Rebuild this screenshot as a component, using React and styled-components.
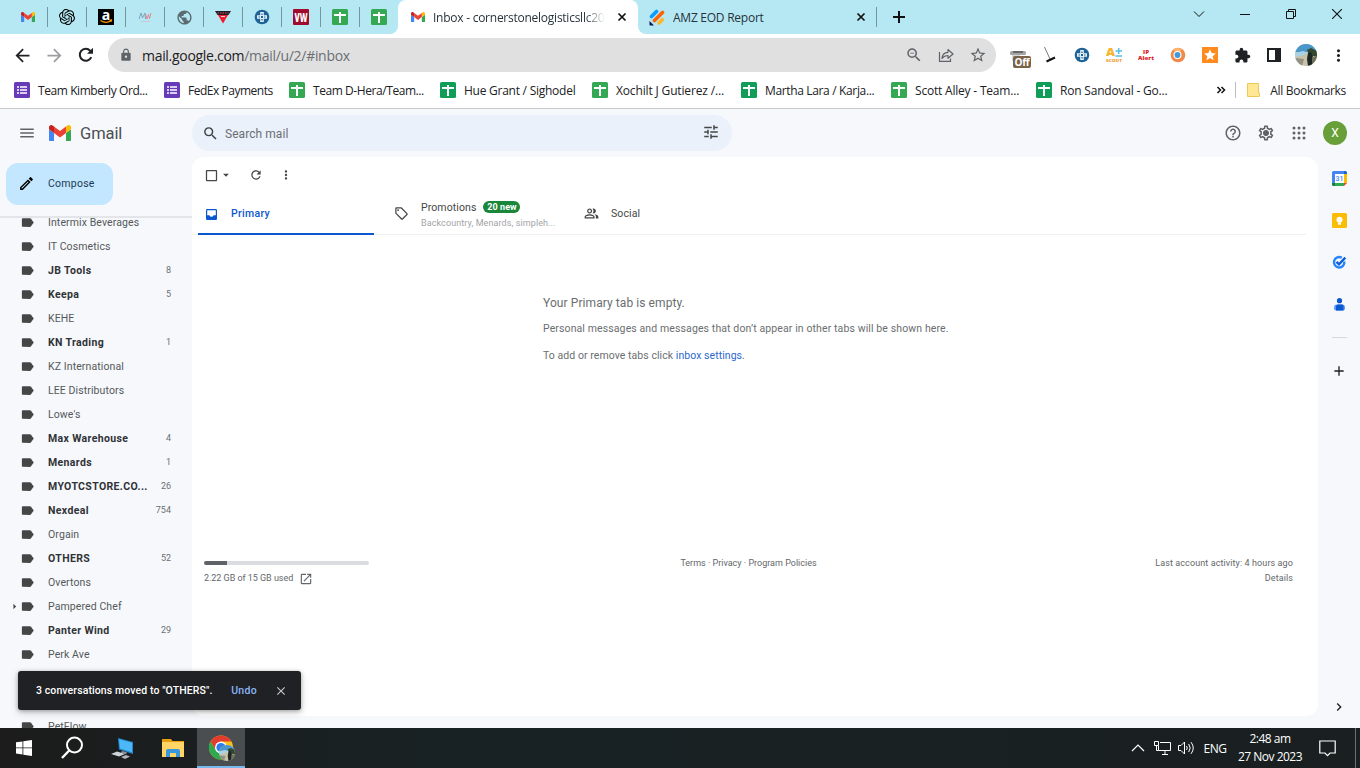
import React from "react";
import styled, { createGlobalStyle } from "styled-components";
import {
  MdSearch,
  MdMenu,
  MdTune,
  MdHelpOutline,
  MdOutlineSettings,
  MdRefresh,
  MdMoreVert,
  MdOutlineSell,
  MdOutlinePeopleAlt,
  MdOpenInNew,
  MdClose,
  MdArrowDropDown,
  MdArrowRight,
  MdCheckBoxOutlineBlank,
  MdOutlineModeEdit,
  MdArrowBack,
  MdArrowForward,
  MdLock,
  MdZoomOut,
  MdStarBorder,
  MdStar,
  MdExtension,
  MdAdd,
  MdChevronRight,
  MdLabel,
  MdPublic,
} from "react-icons/md";
import { SiOpenai } from "react-icons/si";

const GlobalStyle = createGlobalStyle`
  * {
    box-sizing: border-box;
  }
  body {
    margin: 0;
    overflow: hidden;
    font-family: "Open Sans", "Noto Sans", sans-serif;
  }
  svg {
    display: block;
    flex: none;
  }
`;

const Screen = styled.div`
  width: 1360px;
  height: 768px;
  display: flex;
  flex-direction: column;
  overflow: hidden;
`;

const Text = styled.span`
  white-space: nowrap;
  letter-spacing: ${(p) => p.$ls || 0}px;
`;

/* ---------- browser tabs ---------- */

const TabStrip = styled.div`
  height: 34px;
  flex: none;
  display: flex;
  background: #fff;
`;

const PinnedTabs = styled.div`
  width: 398px;
  padding-left: 9px;
  display: flex;
  align-items: center;
  background: #b5e8f3;
  border-bottom-right-radius: 8px;
`;

const PinnedTab = styled.div`
  width: 39px;
  height: 20px;
  flex: none;
  display: flex;
  align-items: center;
  justify-content: center;
  border-right: 1px solid ${(p) => (p.$last ? "transparent" : "#74969d")};
`;

const ActiveTabWrap = styled.div`
  width: 240px;
  background: #b5e8f3;
`;

const ActiveTab = styled.div`
  height: 34px;
  display: flex;
  align-items: center;
  padding: 0 6px 0 13px;
  background: #fff;
  border-radius: 8px 8px 0 0;
`;

const TabTitle = styled.div`
  width: ${(p) => p.$w}px;
  margin: 0 ${(p) => p.$gap || 0}px 0 8px;
  font-size: 12px;
  letter-spacing: ${(p) => p.$ls}px;
  color: #27333a;
  white-space: nowrap;
  overflow: hidden;
  mask-image: ${(p) =>
    p.$fade ? "linear-gradient(90deg, #000 88%, transparent)" : "none"};
`;

const OtherTabs = styled.div`
  flex: 1;
  display: flex;
  align-items: center;
  padding-left: 11px;
  background: #b5e8f3;
  border-bottom-left-radius: 8px;
`;

const TabDivider = styled.div`
  width: 1px;
  height: 20px;
  margin: 0 14px 0 5px;
  background: #74969d;
`;

const WindowControls = styled.div`
  display: flex;
  margin-left: auto;
  align-self: flex-start;
`;

const WindowButton = styled.div`
  width: 46px;
  height: 28px;
  display: flex;
  align-items: center;
  justify-content: center;
`;

/* ---------- address bar and bookmarks ---------- */

const Toolbar = styled.div`
  height: 42px;
  flex: none;
  display: flex;
  align-items: center;
  padding: 0 6px;
  background: #fff;
`;

const ToolCell = styled.div`
  width: 32px;
  display: flex;
  align-items: center;
  justify-content: center;
  color: ${(p) => p.$color || "#202124"};
`;

const Omnibox = styled.div`
  width: 888px;
  height: 34px;
  margin: 0 6px;
  padding: 0 2px 0 11px;
  display: flex;
  align-items: center;
  border-radius: 17px;
  background: #e0e0e0;
  color: #5f6368;
`;

const Url = styled.div`
  flex: 1;
  margin-left: 9px;
  font-size: 14px;
  letter-spacing: -0.3px;
  color: #6b6f73;

  b {
    font-weight: 400;
    color: #202124;
  }
`;

const ExtensionBadge = styled.div`
  position: relative;

  span {
    position: absolute;
    left: 4px;
    top: 9px;
    width: 18px;
    height: 12px;
    border-radius: 2px;
    background: #7a6248;
    color: #fff;
    font-size: 10px;
    font-weight: 700;
    line-height: 12px;
    letter-spacing: -0.3px;
    text-align: center;
  }
`;

const OrangeTile = styled.div`
  width: 16px;
  height: 16px;
  background: #ff8a1e;
  color: #fff;
  display: flex;
  align-items: center;
  justify-content: center;
`;

const BookmarkBar = styled.div`
  height: 33px;
  flex: none;
  display: flex;
  align-items: center;
  padding: 0 14px 4px;
  background: #fff;
  border-bottom: 1px solid #c9cbcf;
`;

const Bookmark = styled.div`
  display: flex;
  align-items: center;
  margin-right: 16px;
  color: #202124;
  font-size: 12px;

  span {
    width: ${(p) => p.$w}px;
    margin-left: 8px;
    white-space: nowrap;
    letter-spacing: ${(p) => p.$ls || -0.2}px;
  }
`;

const BookmarkEnd = styled.div`
  margin-left: auto;
  display: flex;
  align-items: center;
  font-size: 12px;
  color: #202124;

  span {
    margin-left: 10px;
  }
`;

const BookmarkDivider = styled.div`
  width: 1px;
  height: 16px;
  margin: 0 11px 0 9px;
  background: #b9bcc0;
`;

/* ---------- gmail ---------- */

const Page = styled.div`
  height: 619px;
  flex: none;
  display: flex;
  flex-direction: column;
  background: #f6f8fc;
  font-family: Roboto, "Liberation Sans", sans-serif;
`;

const Header = styled.div`
  height: 48px;
  flex: none;
  display: flex;
  align-items: center;
  padding: 0 13px 0 18px;
  color: #5f6368;
`;

const Brand = styled.div`
  width: 174px;
  display: flex;
  align-items: center;

  span {
    margin-left: 9px;
    font-size: 16.5px;
    letter-spacing: -0.1px;
    color: #4c4f53;
  }
  svg + svg {
    margin-left: 13px;
  }
`;

const SearchBox = styled.div`
  width: 540px;
  height: 36px;
  padding: 0 12px 0 10px;
  display: flex;
  align-items: center;
  justify-content: space-between;
  border-radius: 18px;
  background: #eaf1fb;
  color: #444746;

  div {
    display: flex;
    align-items: center;
    gap: 6px;
    font-size: 12px;
    color: #6a6e72;
  }
  div svg {
    color: #3c4043;
  }
  div span {
    padding-top: 1px;
  }
  > svg {
    margin-bottom: 2px;
  }
`;

const HeaderIcons = styled.div`
  display: flex;
  align-items: center;
  margin-left: auto;
  gap: 15px;
`;

const Avatar = styled.div`
  width: 24px;
  height: 24px;
  border-radius: 50%;
  background: #689f38;
  color: #fff;
  font-size: 12px;
  line-height: 24px;
  text-align: center;
`;

const Body = styled.div`
  flex: 1;
  min-height: 0;
  display: flex;
`;

const Sidebar = styled.div`
  width: 192px;
  display: flex;
  flex-direction: column;
`;

const Compose = styled.div`
  width: 107px;
  height: 42px;
  flex: none;
  margin: 6px 0 11px 6px;
  padding: 0 0 1px 12px;
  display: flex;
  align-items: center;
  gap: 13px;
  border-radius: 12px;
  background: #c2e7ff;
  color: #1d3a52;
  font-size: 10.5px;
`;

const LabelList = styled.div`
  flex: 1;
  min-height: 0;
  overflow: hidden;
  border-top: 2px solid #e3e5e9;
`;

const LabelInner = styled.div`
  margin-top: -8px;
`;

const LabelRow = styled.div`
  height: 24px;
  display: flex;
  align-items: center;
  padding: 0 21px 0 8px;
  font-size: 10.5px;
  font-weight: ${(p) => (p.$unread ? 700 : 400)};
  color: ${(p) => (p.$unread ? "#303235" : "#55585a")};

  > span {
    width: 12px;
  }
  p {
    flex: 1;
    margin: 0 0 0 13px;
    white-space: nowrap;
    letter-spacing: ${(p) => (p.$unread ? 0.36 : 0.1)}px;
  }
  small {
    font-size: 9px;
    font-weight: 400;
    color: #6b6f73;
  }
`;

const LabelGap = styled.div`
  height: 48px;
`;

const Card = styled.div`
  width: 1126px;
  height: 559px;
  display: flex;
  flex-direction: column;
  border-radius: 12px;
  background: #fff;
`;

const ListTools = styled.div`
  height: 37px;
  flex: none;
  display: flex;
  align-items: center;
  padding: 0 0 1px 12px;
  color: #444746;

  svg:nth-child(3) {
    margin-left: 16px;
  }
  svg:nth-child(4) {
    margin-left: 16px;
  }
`;

const Categories = styled.div`
  height: 41px;
  width: 1114px;
  flex: none;
  display: flex;
  border-bottom: 1px solid #f0f1f2;
`;

const Category = styled.div`
  position: relative;
  width: 190px;
  display: flex;
  align-items: center;
  padding: 0 0 1px 12px;
  font-size: 10.5px;
  font-weight: ${(p) => (p.$active ? 500 : 400)};
  color: ${(p) => (p.$active ? "#0b57d0" : "#444746")};

  &::after {
    content: "";
    position: absolute;
    left: 6px;
    bottom: -1px;
    width: 176px;
    height: 2px;
    background: ${(p) => (p.$active ? "#0b57d0" : "transparent")};
  }
`;

const CategoryText = styled.div`
  margin-left: 12px;
  padding-top: ${(p) => p.$top || 0}px;

  > div {
    display: flex;
    align-items: center;
    height: 15px;
    letter-spacing: ${(p) => p.$ls || 0.1}px;
  }
  small {
    display: block;
    height: 15px;
    font-size: 9px;
    line-height: 17px;
    letter-spacing: 0.1px;
    color: #a2a4a7;
    white-space: nowrap;
  }
`;

const NewBadge = styled.span`
  width: 37px;
  height: 12px;
  margin-left: 7px;
  border-radius: 6px;
  background: #198639;
  color: #fff;
  font-size: 9px;
  font-weight: 700;
  line-height: 12px;
  text-align: center;
  letter-spacing: 0.1px;
`;

const EmptyState = styled.div`
  margin: 59px 0 0 351px;
  height: 262px;
  font-size: 10.5px;
  letter-spacing: 0.11px;
  color: #6b6e70;

  h3 {
    margin: 0;
    font-size: 12px;
    font-weight: 400;
    line-height: 18px;
    letter-spacing: 0.08px;
  }
  p {
    margin: 0;
    line-height: 15px;
    white-space: nowrap;
  }
  h3 + p {
    margin: 9px 0 12px;
  }
  p:last-child {
    letter-spacing: 0.06px;
  }
  a {
    color: #2a69d0;
  }
`;

const Footer = styled.div`
  display: grid;
  grid-template-columns: 300px 1fr 300px;
  padding: 0 25px 0 12px;
  font-size: 9px;
  line-height: 15px;
  color: #63676b;
`;

const Storage = styled.div`
  div {
    width: 165px;
    height: 4px;
    margin: 5px 0 6px;
    border-radius: 2px;
    background: linear-gradient(90deg, #5f6368 23px, #dadce0 23px);
  }
  p {
    margin: 0;
    display: flex;
    align-items: center;
    gap: 6px;
    letter-spacing: -0.04px;
  }
`;

const FooterLinks = styled.div`
  text-align: center;
`;

const Activity = styled.div`
  text-align: right;
  letter-spacing: 0.1px;
`;

const SidePanel = styled.div`
  width: 42px;
  height: 571px;
  display: flex;
  flex-direction: column;
  align-items: center;
  padding: 14px 0 13px;
  gap: 27px;
  color: #1f1f1f;
`;

const PanelRule = styled.div`
  width: 15px;
  height: 1px;
  margin: -2px 0 -2px;
  background: #d5d8dc;
`;

const PanelBottom = styled.div`
  margin-top: auto;
`;

const Toast = styled.div`
  position: absolute;
  left: 18px;
  top: 671px;
  width: 283px;
  height: 39px;
  padding: 0 13px 0 18px;
  display: flex;
  align-items: center;
  border-radius: 3px;
  background: #202124;
  box-shadow: 0 1px 4px rgba(0, 0, 0, 0.3), 0 3px 8px rgba(0, 0, 0, 0.15);
  font-family: Roboto, "Liberation Sans", sans-serif;
  font-size: 10.5px;
  font-weight: 500;
  color: #fff;

  a {
    margin: 0 17px 0 auto;
    letter-spacing: 0.3px;
    color: #8ab4f8;
  }
  svg {
    color: #c4c7c5;
  }
`;

/* ---------- taskbar ---------- */

const Taskbar = styled.div`
  height: 40px;
  flex: none;
  display: flex;
  align-items: center;
  background: linear-gradient(90deg, #1c1c1c, #182224 35%, #1a1f20);
  color: #fff;
`;

const TaskButton = styled.div`
  width: ${(p) => p.$w}px;
  height: 40px;
  display: flex;
  align-items: center;
  justify-content: center;
  padding-top: ${(p) => (p.$open ? 2 : 0)}px;
  background: ${(p) => (p.$open ? "#4a4e50" : "transparent")};
  border-bottom: ${(p) => (p.$open ? "2px solid #76b9ed" : "none")};
`;

const Tray = styled.div`
  margin-left: auto;
  display: flex;
  align-items: center;
  font-size: 12px;
`;

const TrayItem = styled.div`
  width: 24px;
  display: flex;
  justify-content: center;
`;

const Lang = styled.div`
  width: 34px;
  text-align: center;
  letter-spacing: -0.4px;
`;

const Clock = styled.div`
  width: 76px;
  margin-right: 7px;
  line-height: 18px;
  text-align: center;
  letter-spacing: -0.5px;
  white-space: nowrap;
`;

const ShowDesktop = styled.div`
  width: 5px;
  height: 40px;
  margin-left: 16px;
  border-left: 1px solid #6d7173;
`;

/* ---------- drawings ---------- */

const GmailLogo = ({ w }) => (
  <svg width={w} height={w * 0.75} viewBox="52 42 88 66">
    <path fill="#4285f4" d="M58 108h14V74L52 59v43c0 3.32 2.69 6 6 6" />
    <path fill="#34a853" d="M120 108h14c3.32 0 6-2.69 6-6V59l-20 15" />
    <path fill="#fbbc04" d="M120 48v26l20-15v-8c0-7.42-8.47-11.65-14.4-7.2" />
    <path fill="#ea4335" d="M72 74V48l24 18 24-18v26L96 92" />
    <path fill="#c5221f" d="M52 51v8l20 15V48l-5.6-4.2c-5.94-4.45-14.4-.22-14.4 7.2" />
  </svg>
);

const SheetsIcon = ({ color = "#34a853" }) => (
  <svg width="16" height="16">
    <rect width="16" height="16" rx="1.5" fill={color} />
    <path d="M2 6h12M8 3v11" stroke="#fff" strokeWidth="2" />
  </svg>
);

const FormsIcon = () => (
  <svg width="16" height="16">
    <rect width="16" height="16" rx="1.5" fill="#673ab7" />
    <path
      d="M3 5h2M3 8h2M3 11h2M6 5h7M6 8h7M6 11h7"
      stroke="#fff"
      strokeWidth="1.6"
    />
  </svg>
);

const AmazonIcon = () => (
  <svg width="16" height="16">
    <rect width="16" height="16" fill="#000" />
    <text x="8" y="10.5" fontFamily="Open Sans" fontSize="14" fontWeight="700" fill="#fff" textAnchor="middle">
      a
    </text>
    <path d="M2.5 11.500q5.500 3.600 10.500.3M11.500 11.200l2-.2-.5 1.800" fill="none" stroke="#f90" strokeWidth="1.200" />
  </svg>
);

const MwIcon = () => (
  <svg width="16" height="16">
    <path d="M2 10l2-6 1.500 5L8 4l.5 6" fill="none" stroke="#7ea3c0" strokeWidth="1" />
    <path d="M8.500 5l1.500 5 1.500-4.500 1 4L14 4" fill="none" stroke="#e08a93" strokeWidth="1" />
    <path d="M4 12.500h9" stroke="#d9b6c0" strokeWidth=".7" />
  </svg>
);

const TriangleIcon = () => (
  <svg width="16" height="16">
    <path d="M0 2h16l-2.500 4h-11z" fill="#231a2c" />
    <path d="M3 6h10L8 14.500z" fill="#f21b2b" />
    <path d="M2.500 4h11" stroke="#d85a4a" strokeWidth="1" strokeDasharray="1.500 1" />
    <path d="M6 7.500h4" stroke="#fff" strokeWidth=".8" />
  </svg>
);

const CrossIcon = () => (
  <svg width="16" height="16">
    <circle cx="8" cy="8" r="7.300" fill="#1f6396" />
    <path d="M6.200 3h3.600v3.200H13v3.600H9.800V13H6.200V9.800H3V6.200h3.200z" fill="#e2f2fa" />
    <path d="M8 4.500v1.500M8 10v1.500M4.500 8h1.500M10 8h1.500" stroke="#1f6396" strokeWidth="1.200" />
    <rect x="7" y="7" width="2" height="2" fill="#1f6396" />
  </svg>
);

const VwIcon = () => (
  <svg width="16" height="16">
    <rect width="16" height="16" rx="1" fill="#a00a2d" />
    <text x="8" y="12.500" fontFamily="Open Sans" fontSize="12.500" fontWeight="800" fill="#fff" textAnchor="middle" textLength="13" lengthAdjust="spacingAndGlyphs">
      VW
    </text>
  </svg>
);

const JotformIcon = () => (
  <svg width="16" height="17" strokeLinecap="round" strokeWidth="3.600" fill="none">
    <path d="M2.500 7.500L7.500 2.500" stroke="#0a9bff" />
    <path d="M5.500 11.500L13.500 3.500" stroke="#ff6100" />
    <path d="M10 14L13.300 10.700" stroke="#ffb629" />
    <path d="M.5 12v3.500q0 .9.900.9H5z" fill="#0a1551" stroke="none" />
  </svg>
);

const Stroke = ({ d, size = 10, color = "#111", w = 1 }) => (
  <svg width={size} height={size} viewBox={`0 0 ${size} ${size}`}>
    <path d={d} fill="none" stroke={color} strokeWidth={w} />
  </svg>
);

const ReloadIcon = () => (
  <svg width="16" height="16">
    <path d="M13.300 10.200A6 6 0 1 1 12.200 3.700L14 5.500" fill="none" stroke="#202124" strokeWidth="2" />
    <path d="M15 .8v6H9z" fill="#202124" />
  </svg>
);

const ShareIcon = () => (
  <svg width="16" height="16" fill="none" stroke="#5f6368" strokeWidth="1.200">
    <path d="M1.500 5v9.300h11V11.500" />
    <path d="M4 11.500c.3-4 2.500-6 6-6.200V2.500L15 7l-5 4.300V8.500c-2.500 0-4.300.8-6 3z" strokeLinejoin="round" />
  </svg>
);

const BroomIcon = () => (
  <svg width="16" height="16">
    <path d="M2.500 0l5.500 12" stroke="#777" strokeWidth="1" />
    <path d="M4.500 14.500L13 10.500" stroke="#111" strokeWidth="2" />
  </svg>
);

const PrinterIcon = () => (
  <svg width="18" height="16">
    <rect x="1" y="4" width="16" height="4" rx="1.500" fill="#a5a5a5" />
    <path d="M4 5h10" stroke="#555" strokeWidth="1.500" />
    <rect x="3" y="8" width="8" height="6" fill="#d8d8d8" />
  </svg>
);

const ScoutIcon = () => (
  <svg width="16" height="16" fontFamily="Open Sans" fontWeight="800">
    <text x="0" y="8.500" fontSize="10" fill="#f7b32b" textLength="9" lengthAdjust="spacingAndGlyphs">A</text>
    <path d="M9.500 4h6.500M12.700 1v6M9.500 9h6.500" stroke="#53bfe8" strokeWidth="1.500" />
    <text x="0" y="15" fontSize="4.200" fill="#f09a2a" textLength="16" lengthAdjust="spacingAndGlyphs">SCOUT</text>
  </svg>
);

const IpAlertIcon = () => (
  <svg width="16" height="16" fontFamily="Open Sans" fontWeight="800" fill="#dd1c2a">
    <text x="5" y="6.500" fontSize="5.200" textLength="6" lengthAdjust="spacingAndGlyphs">IP</text>
    <text x="0" y="12.700" fontSize="5.200" textLength="16" lengthAdjust="spacingAndGlyphs">Alert</text>
  </svg>
);

const BallIcon = () => (
  <svg width="16" height="16">
    <circle cx="8" cy="8" r="7.300" fill="#f08a4b" />
    <path d="M3 3a7 7 0 0 1 9-.5L8 6z" fill="#ffb56b" />
    <circle cx="7.500" cy="8" r="4" fill="#fff" />
    <circle cx="7.500" cy="8" r="2.900" fill="#3e9ad8" />
  </svg>
);

const PanelIcon = () => (
  <svg width="16" height="16">
    <rect x="2" y="2" width="12" height="12" fill="#fff" stroke="#202124" strokeWidth="2" />
    <rect x="9" y="2" width="5" height="12" fill="#202124" />
  </svg>
);

const ProfilePhoto = ({ size = 22 }) => (
  <svg width={size} height={size} viewBox="0 0 22 22">
    <clipPath id={"photo" + size}>
      <circle cx="11" cy="11" r="11" />
    </clipPath>
    <g clipPath={`url(#photo${size})`}>
      <rect width="22" height="22" fill="#c9c2a8" />
      <rect width="22" height="8" fill="#4a97cc" />
      <path d="M0 9l8-2 6 2-8 3-6 1z" fill="#a9d3e4" />
      <path d="M12 6l4-2 6 3v6l-8-2z" fill="#33482f" />
      <path d="M13 9l3-1 2 5-1 9h-4l-1-7z" fill="#1d2826" />
      <path d="M0 14l9 1-2 7H0z" fill="#8f9285" />
      <path d="M17 13h5v9h-5z" fill="#6c7159" />
    </g>
  </svg>
);

const FolderIcon = () => (
  <svg width="13" height="14">
    <path d="M.5.5h11v9.500h1v3.500H.5z" fill="#ffe793" stroke="#edc85a" />
  </svg>
);

const GearIcon = () => (
  <svg width="18" height="18">
    <MdOutlineSettings size={18} color="#5f6368" />
    <circle cx="9" cy="9" r="2.600" fill="#5f6368" />
  </svg>
);

const AppsIcon = () => (
  <svg width="18" height="18" fill="#5f6368">
    {[4, 9, 14].map((y) =>
      [4, 9, 14].map((x) => <circle key={x + "-" + y} cx={x} cy={y} r="1.500" />)
    )}
  </svg>
);

const InboxIcon = () => (
  <svg width="15" height="15">
    <path d="M3.200 3h8.600q1.200 0 1.200 1.200v8.600q0 1.200-1.200 1.200H3.200Q2 14 2 12.800V4.200Q2 3 3.200 3z" fill="#0b57d0" />
    <path d="M3.200 4.200h8.600v5H9.600q-.6 1.600-2.100 1.600T5.400 9.200H3.200z" fill="#fff" />
  </svg>
);

const CalendarIcon = () => (
  <svg width="15" height="15">
    <path d="M1.500 0H12v3H3v9H0V1.500Q0 0 1.500 0z" fill="#4285f4" />
    <path d="M12 0h1.500Q15 0 15 1.500V3h-3z" fill="#1967d2" />
    <path d="M12 3h3v9h-3z" fill="#fbbc04" />
    <path d="M3 12h9v3H3z" fill="#34a853" />
    <path d="M0 12h3v3H1.500Q0 15 0 13.500z" fill="#188038" />
    <path d="M12 12h3l-3 3z" fill="#ea4335" />
    <rect x="3" y="3" width="9" height="9" fill="#fff" />
    <text x="7.500" y="10" fontFamily="Roboto" fontSize="7" fontWeight="500" fill="#4285f4" textAnchor="middle">
      31
    </text>
  </svg>
);

const KeepIcon = () => (
  <svg width="15" height="15">
    <rect width="15" height="15" rx="1.500" fill="#fbbc04" />
    <circle cx="7.500" cy="6.800" r="3" fill="#fff" />
    <path d="M6 9.500h3v2.300H6z" fill="#fff" />
  </svg>
);

const TasksIcon = () => (
  <svg width="15" height="15" fill="none">
    <path d="M9.800 2.800A5.200 5.200 0 1 0 12.300 6.500" stroke="#2684fc" strokeWidth="2.400" />
    <path d="M4.500 6.800l2.500 2.500 6.300-6.600" stroke="#0b5fd8" strokeWidth="2.400" />
  </svg>
);

const ContactsIcon = () => (
  <svg width="15" height="15">
    <circle cx="7.500" cy="3.700" r="2.600" fill="#0b57d0" />
    <path d="M2 10.500Q2 7.500 5 7.500h5q3 0 3 3v1q0 2-2 2H4q-2 0-2-2z" fill="#5c9bff" />
    <path d="M5.500 7.500h5q1 .6 1 1.500v4.500H4V9z" fill="#0b57d0" />
  </svg>
);

const WindowsIcon = () => (
  <svg width="16" height="16" fill="#fff">
    <path d="M0 2.300L6.500 1.400v6.100H0zM7.300 1.300L16 0v7.500H7.300zM0 8.300h6.500v6.200L0 13.600zM7.300 8.300H16V16l-8.700-1.300z" />
  </svg>
);

const FinderIcon = () => (
  <svg width="24" height="24" fill="none" stroke="#fff" strokeWidth="2">
    <circle cx="14.500" cy="9" r="7.500" />
    <path d="M9.200 14.500L2 22" strokeWidth="2.400" />
  </svg>
);

const ComputerIcon = () => (
  <svg width="24" height="22">
    <path d="M8 1l15 4v12L9 12.500z" fill="#1e87d0" />
    <path d="M9 2.300l13 3.500v9.500L10 11.500z" fill="#4db8f8" />
    <path d="M12 14l5 1.300-1 2-5-1.500z" fill="#8b9299" />
    <path d="M1 17l6-2.500 8 2.500-6 2.500z" fill="#cfd4d8" />
    <path d="M11 20l5-2 4 1.500-5 2.500z" fill="#b0b7bd" />
  </svg>
);

const ExplorerIcon = () => (
  <svg width="22" height="18">
    <path d="M0 0h9l1.500 2H22v16H0z" fill="#e8a10e" />
    <path d="M0 3h22v15H0z" fill="#ffd666" />
    <path d="M4 18v-6q0-2 2-2h10q2 0 2 2v6h-4v-4H8v4z" fill="#3a96dd" />
  </svg>
);

const ChromeIcon = () => (
  <svg width="28" height="28" viewBox="0 0 28 28">
    <circle cx="14" cy="13.500" r="12" fill="#fbc116" />
    <path d="M3.600 7.500A12 12 0 0 1 24.400 7.500H14L8.800 16.500z" fill="#e33b2e" />
    <path d="M3.600 7.500A12 12 0 0 0 14 25.500l5.200-9H8.800z" fill="#2da94f" />
    <circle cx="14" cy="13.500" r="6" fill="#fff" />
    <circle cx="14" cy="13.500" r="4.600" fill="#2f7de9" />
    <g transform="translate(12 11)">
      <ProfilePhoto size={16} />
    </g>
  </svg>
);

/* ---------- data ---------- */

const pinned = [
  <GmailLogo w={14} />,
  <SiOpenai size={16} />,
  <AmazonIcon />,
  <MwIcon />,
  <MdPublic size={17} color="#5b6b70" />,
  <TriangleIcon />,
  <CrossIcon />,
  <VwIcon />,
  <SheetsIcon />,
  <SheetsIcon />,
];

const bookmarks = [
  { name: "Team Kimberly Ord...", w: 110, ls: -0.42, icon: <FormsIcon /> },
  { name: "FedEx Payments", w: 85, ls: -0.48, icon: <FormsIcon /> },
  { name: "Team D-Hera/Team...", w: 111, ls: -0.43, icon: <SheetsIcon /> },
  { name: "Hue Grant / Sighodel", w: 112, ls: -0.25, icon: <SheetsIcon color="#0f9d58" /> },
  { name: "Xochilt J Gutierez /...", w: 109, ls: -0.15, icon: <SheetsIcon /> },
  { name: "Martha Lara / Karja...", w: 110, ls: -0.35, icon: <SheetsIcon color="#0f9d58" /> },
  { name: "Scott Alley - Team...", w: 105, icon: <SheetsIcon /> },
  { name: "Ron Sandoval - Go...", w: 108, icon: <SheetsIcon color="#0f9d58" /> },
];

const labels = [
  { name: "Intermix Beverages" },
  { name: "IT Cosmetics" },
  { name: "JB Tools", count: 8 },
  { name: "Keepa", count: 5 },
  { name: "KEHE" },
  { name: "KN Trading", count: 1 },
  { name: "KZ International" },
  { name: "LEE Distributors" },
  { name: "Lowe's" },
  { name: "Max Warehouse", count: 4 },
  { name: "Menards", count: 1 },
  { name: "MYOTCSTORE.CO...", count: 26 },
  { name: "Nexdeal", count: 754 },
  { name: "Orgain" },
  { name: "OTHERS", count: 52 },
  { name: "Overtons" },
  { name: "Pampered Chef", nested: true },
  { name: "Panter Wind", count: 29 },
  { name: "Perk Ave" },
];

function Label({ name, count, nested }) {
  return (
    <LabelRow $unread={!!count}>
      <span>{nested && <MdArrowRight size={13} color="#444746" />}</span>
      <MdLabel size={15} color="#444746" />
      <p>{name}</p>
      {count && <small>{count}</small>}
    </LabelRow>
  );
}

function Browser() {
  return (
    <>
      <TabStrip>
        <PinnedTabs>
          {pinned.map((icon, i) => (
            <PinnedTab key={i} $last={i === pinned.length - 1}>
              {icon}
            </PinnedTab>
          ))}
        </PinnedTabs>
        <ActiveTabWrap>
          <ActiveTab>
            <GmailLogo w={14} />
            <TabTitle $w={172} $gap={7} $ls={-0.25} $fade>
              Inbox - cornerstonelogisticsllc20
            </TabTitle>
            <Stroke size={20} d="M6.500 6.500l7 7M13.500 6.500l-7 7" w={1.700} />
          </ActiveTab>
        </ActiveTabWrap>
        <OtherTabs>
          <JotformIcon />
          <TabTitle $w={178} $ls={-0.25}>
            AMZ EOD Report
          </TabTitle>
          <Stroke size={20} d="M6.500 6.500l7 7M13.500 6.500l-7 7" w={1.700} />
          <TabDivider />
          <Stroke size={16} d="M2 8h12M8 2v12" w={2} />
          <WindowControls>
            <WindowButton>
              <Stroke size={12} d="M1 3.500l5 5 5-5" />
            </WindowButton>
            <WindowButton>
              <Stroke size={10} d="M0 5.500h10" />
            </WindowButton>
            <WindowButton>
              <Stroke size={10} d="M.5 2.500h7v7h-7zM2.500 2.500v-2h7v7h-2" />
            </WindowButton>
            <WindowButton>
              <Stroke size={10} d="M0 0l10 10M10 0L0 10" w={1.100} />
            </WindowButton>
          </WindowControls>
        </OtherTabs>
      </TabStrip>
      <Toolbar>
        <ToolCell>
          <MdArrowBack size={21} />
        </ToolCell>
        <ToolCell $color="#9c9ea1">
          <MdArrowForward size={21} />
        </ToolCell>
        <ToolCell>
          <ReloadIcon />
        </ToolCell>
        <Omnibox>
          <MdLock size={14} />
          <Url>
            <b>mail.google.com</b>/mail/u/2/#inbox
          </Url>
          <ToolCell $color="#5f6368">
            <MdZoomOut size={18} />
          </ToolCell>
          <ToolCell>
            <ShareIcon />
          </ToolCell>
          <ToolCell $color="#5f6368">
            <MdStarBorder size={18} />
          </ToolCell>
        </Omnibox>
        <ToolCell>
          <ExtensionBadge>
            <PrinterIcon />
            <span>Off</span>
          </ExtensionBadge>
        </ToolCell>
        <ToolCell>
          <BroomIcon />
        </ToolCell>
        <ToolCell>
          <CrossIcon />
        </ToolCell>
        <ToolCell>
          <ScoutIcon />
        </ToolCell>
        <ToolCell>
          <IpAlertIcon />
        </ToolCell>
        <ToolCell>
          <BallIcon />
        </ToolCell>
        <ToolCell>
          <OrangeTile>
            <MdStar size={14} />
          </OrangeTile>
        </ToolCell>
        <ToolCell>
          <MdExtension size={17} />
        </ToolCell>
        <ToolCell>
          <PanelIcon />
        </ToolCell>
        <ToolCell>
          <ProfilePhoto />
        </ToolCell>
        <ToolCell>
          <MdMoreVert size={19} />
        </ToolCell>
      </Toolbar>
      <BookmarkBar>
        {bookmarks.map((b) => (
          <Bookmark key={b.name} $w={b.w} $ls={b.ls}>
            {b.icon}
            <span>{b.name}</span>
          </Bookmark>
        ))}
        <BookmarkEnd>
          <Stroke size={10} d="M1.500 2l3 3-3 3M5.500 2l3 3-3 3" w={1.500} />
          <BookmarkDivider />
          <FolderIcon />
          <Text $ls={-0.33}>All Bookmarks</Text>
        </BookmarkEnd>
      </BookmarkBar>
    </>
  );
}

function Gmail() {
  return (
    <Page>
      <Header>
        <Brand>
          <MdMenu size={18} />
          <GmailLogo w={22} />
          <span>Gmail</span>
        </Brand>
        <SearchBox>
          <div>
            <MdSearch size={17} />
            <Text $ls={0.06}>Search mail</Text>
          </div>
          <MdTune size={18} />
        </SearchBox>
        <HeaderIcons>
          <MdHelpOutline size={18} />
          <GearIcon />
          <AppsIcon />
          <Avatar>X</Avatar>
        </HeaderIcons>
      </Header>
      <Body>
        <Sidebar>
          <Compose>
            <MdOutlineModeEdit size={17} color="#000" />
            <Text $ls={0.25}>Compose</Text>
          </Compose>
          <LabelList>
            <LabelInner>
              {labels.map((l) => (
                <Label key={l.name} {...l} />
              ))}
              <LabelGap />
              <Label name="PetFlow" />
            </LabelInner>
          </LabelList>
        </Sidebar>
        <Card>
          <ListTools>
            <MdCheckBoxOutlineBlank size={15} />
            <MdArrowDropDown size={14} />
            <MdRefresh size={14} />
            <MdMoreVert size={14} />
          </ListTools>
          <Categories>
            <Category $active>
              <InboxIcon />
              <CategoryText $ls={0.3}>
                <div>Primary</div>
              </CategoryText>
            </Category>
            <Category>
              <MdOutlineSell size={15} />
              <CategoryText $top={2}>
                <div>
                  Promotions
                  <NewBadge>20 new</NewBadge>
                </div>
                <small>Backcountry, Menards, simpleh...</small>
              </CategoryText>
            </Category>
            <Category>
              <MdOutlinePeopleAlt size={15} />
              <CategoryText>
                <div>Social</div>
              </CategoryText>
            </Category>
          </Categories>
          <EmptyState>
            <h3>Your Primary tab is empty.</h3>
            <p>
              Personal messages and messages that don’t appear in other tabs
              will be shown here.
            </p>
            <p>
              To add or remove tabs click <a>inbox settings</a>.
            </p>
          </EmptyState>
          <Footer>
            <Storage>
              <div />
              <p>
                2.22 GB of 15 GB used
                <MdOpenInNew size={14} />
              </p>
            </Storage>
            <FooterLinks>Terms · Privacy · Program Policies</FooterLinks>
            <Activity>
              Last account activity: 4 hours ago
              <br />
              Details
            </Activity>
          </Footer>
        </Card>
        <SidePanel>
          <CalendarIcon />
          <KeepIcon />
          <TasksIcon />
          <ContactsIcon />
          <PanelRule />
          <MdAdd size={16} />
          <PanelBottom>
            <MdChevronRight size={16} />
          </PanelBottom>
        </SidePanel>
      </Body>
    </Page>
  );
}

function WindowsBar() {
  return (
    <Taskbar>
      <TaskButton $w={48}>
        <WindowsIcon />
      </TaskButton>
      <TaskButton $w={48}>
        <FinderIcon />
      </TaskButton>
      <TaskButton $w={52}>
        <ComputerIcon />
      </TaskButton>
      <TaskButton $w={49}>
        <ExplorerIcon />
      </TaskButton>
      <TaskButton $w={48} $open>
        <ChromeIcon />
      </TaskButton>
      <Tray>
        <TrayItem>
          <Stroke size={14} color="#fff" d="M1 10l6-6 6 6" w={1.200} />
        </TrayItem>
        <TrayItem>
          <svg width="17" height="16" fill="none" stroke="#fff">
            <path d="M6 2.500h10.500v8H4.500V6M8 14.500h6M11 10.500v4" />
            <path d="M.5 1.500h4v4h-4zM2.500 5.500v5h2" />
          </svg>
        </TrayItem>
        <TrayItem>
          <svg width="17" height="16" fill="none" stroke="#fff">
            <path d="M.5 5.500h2.500l3.500-3.500v12L3 10.500H.5z" />
            <path d="M8.500 6q1.500 2 0 4M10.700 4q3 4 0 8M13 2.200q4.500 5.800 0 11.600" />
          </svg>
        </TrayItem>
        <Lang>ENG</Lang>
        <Clock>
          2:48 am
          <br />
          27 Nov 2023
        </Clock>
        <TrayItem>
          <svg width="17" height="17" fill="none" stroke="#fff" strokeWidth="1.200">
            <path d="M.8 1h15.400v12H11l-2.500 2.700L6 13H.8z" />
          </svg>
        </TrayItem>
        <ShowDesktop />
      </Tray>
    </Taskbar>
  );
}

function App() {
  return (
    <Screen>
      <GlobalStyle />
      <Browser />
      <Gmail />
      <WindowsBar />
      <Toast>
        <Text $ls={0.1}>3 conversations moved to "OTHERS".</Text>
        <a>Undo</a>
        <MdClose size={14} />
      </Toast>
    </Screen>
  );
}

export default App;
